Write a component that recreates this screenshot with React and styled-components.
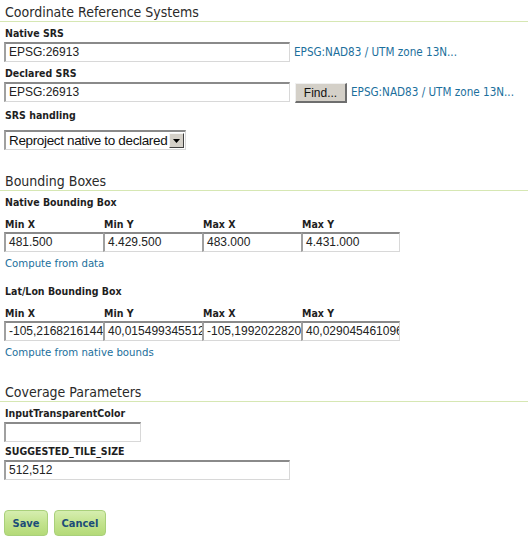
import React from "react";
import styled, { createGlobalStyle } from "styled-components";

const Global = createGlobalStyle`
  html, body { margin: 0; padding: 0; background: #fff; }
  body { font-family: "DejaVu Sans Condensed", "DejaVu Sans", sans-serif; color: #222; }
`;

const Page = styled.div`
  width: 528px;
  padding-top: 2px;
`;

const Section = styled.section`
  margin-top: ${(p) => p.$top || 0}px;
`;

const Heading = styled.h2`
  margin: 0;
  padding: 2px 0 0 5px;
  height: 17px;
  line-height: 17px;
  font-size: 14px;
  font-weight: normal;
  color: #2a2a2a;
  border-bottom: 1px solid #d6e7b3;
`;

const Body = styled.div`
  padding: 0 4px;
`;

const Label = styled.div`
  font-weight: bold;
  font-size: 10.5px;
  line-height: 14px;
  height: 14px;
  padding-left: 1px;
  margin-top: ${(p) => p.$top ?? 4}px;
  margin-bottom: ${(p) => p.$bottom ?? 2}px;
  color: #1e1e1e;
  white-space: nowrap;
`;

const Row = styled.div`
  display: flex;
  align-items: center;
  height: 20px;
`;

const TextBox = styled.div`
  box-sizing: border-box;
  width: ${(p) => p.$w}px;
  height: 20px;
  border-style: solid;
  border-width: 2px 1px 1px 2px;
  border-color: #8a8a8a #d8d8d8 #d8d8d8 #a0a0a0;
  background: #fff;
  font-family: "Liberation Sans", Arial, sans-serif;
  font-size: 12px;
  line-height: 17px;
  padding-left: 3px;
  color: #222;
  white-space: nowrap;
  overflow: hidden;
`;

const Link = styled.a`
  color: #1c6f9c;
  font-size: 11.6px;
  text-decoration: none;
  white-space: nowrap;
  margin-left: 4px;
  cursor: pointer;
`;

const FindButton = styled.button`
  box-sizing: border-box;
  margin-left: 5px;
  height: 20px;
  width: 52px;
  padding: 0;
  position: relative;
  top: 1px;
  background: #d4d0c8;
  border-style: solid;
  border-width: 1px 2px 2px 1px;
  border-color: #f0f0f0 #6e6e6e #6e6e6e #f0f0f0;
  font-family: "Liberation Sans", Arial, sans-serif;
  font-size: 12px;
  color: #111;
`;

const Select = styled.div`
  box-sizing: border-box;
  width: 182px;
  height: 20px;
  margin-top: 8px;
  display: flex;
  align-items: center;
  justify-content: space-between;
  border-style: solid;
  border-width: 2px 1px 1px 2px;
  border-color: #8a8a8a #d8d8d8 #d8d8d8 #a0a0a0;
  font-family: "Liberation Sans", Arial, sans-serif;
  font-size: 13.5px;
  letter-spacing: -0.35px;
  color: #111;
  padding-left: 3px;
  padding-right: 1px;
  white-space: nowrap;
  overflow: hidden;
`;

const Arrow = styled.div`
  box-sizing: border-box;
  flex: none;
  width: 15px;
  height: 15px;
  background: #d4d0c8;
  border-style: solid;
  border-width: 1px 1px 1px 1px;
  border-color: #f4f4f4 #404040 #404040 #f4f4f4;
  display: flex;
  align-items: center;
  justify-content: center;
`;

const Grid = styled.div`
  display: grid;
  grid-template-columns: repeat(4, 99px);
`;

const Cell = styled.div`
  display: flex;
  flex-direction: column;
`;

const ComputeLink = styled(Link)`
  display: block;
  margin: 5px 0 0 1px;
  line-height: 14px;
  font-size: 11.3px;
`;

const Buttons = styled.div`
  display: flex;
  gap: 6px;
  margin-top: 30px;
`;

const GreenButton = styled.button`
  box-sizing: border-box;
  height: 26px;
  width: ${(p) => p.$w}px;
  border: 1px solid #a9d07a;
  border-radius: 4px;
  background: linear-gradient(#d6eeb0, #c3e38e 50%, #b4da78);
  color: #1b4d78;
  font-family: "DejaVu Sans Condensed", "DejaVu Sans", sans-serif;
  font-weight: bold;
  font-size: 11px;
  padding: 0;
`;

const boxes = {
  native: ["481.500", "4.429.500", "483.000", "4.431.000"],
  latlon: ["-105,2168216144", "40,015499345512", "-105,1992022820", "40,029045461096"],
};
const cols = ["Min X", "Min Y", "Max X", "Max Y"];

function BBox({ values }) {
  return (
    <Grid>
      {cols.map((c, i) => (
        <Cell key={c}>
          <Label $top={6} $bottom={1}>{c}</Label>
          <TextBox $w={i === 3 ? 99 : 100}>{values[i]}</TextBox>
        </Cell>
      ))}
    </Grid>
  );
}

export default function App() {
  return (
    <Page>
      <Global />
      <Section>
        <Heading>Coordinate Reference Systems</Heading>
        <Body>
          <Label>Native SRS</Label>
          <Row>
            <TextBox $w={286}>EPSG:26913</TextBox>
            <Link>EPSG:NAD83 / UTM zone 13N...</Link>
          </Row>
          <Label>Declared SRS</Label>
          <Row>
            <TextBox $w={286}>EPSG:26913</TextBox>
            <FindButton>Find...</FindButton>
            <Link>EPSG:NAD83 / UTM zone 13N...</Link>
          </Row>
          <Label $top={6}>SRS handling</Label>
          <Select>
            <span>Reproject native to declared</span>
            <Arrow>
              <svg width="7" height="4" viewBox="0 0 7 4">
                <path d="M0 0h7L3.5 4z" fill="#000" />
              </svg>
            </Arrow>
          </Select>
        </Body>
      </Section>

      <Section $top={21}>
        <Heading>Bounding Boxes</Heading>
        <Body>
          <Label>Native Bounding Box</Label>
          <BBox values={boxes.native} />
          <ComputeLink>Compute from data</ComputeLink>
          <Label $top={13}>Lat/Lon Bounding Box</Label>
          <BBox values={boxes.latlon} />
          <ComputeLink>Compute from native bounds</ComputeLink>
        </Body>
      </Section>

      <Section $top={22}>
        <Heading>Coverage Parameters</Heading>
        <Body>
          <Label>InputTransparentColor</Label>
          <TextBox $w={137} />
          <Label $top={2}>SUGGESTED_TILE_SIZE</Label>
          <TextBox $w={286}>512,512</TextBox>
          <Buttons>
            <GreenButton $w={44}>Save</GreenButton>
            <GreenButton $w={52}>Cancel</GreenButton>
          </Buttons>
        </Body>
      </Section>
    </Page>
  );
}
